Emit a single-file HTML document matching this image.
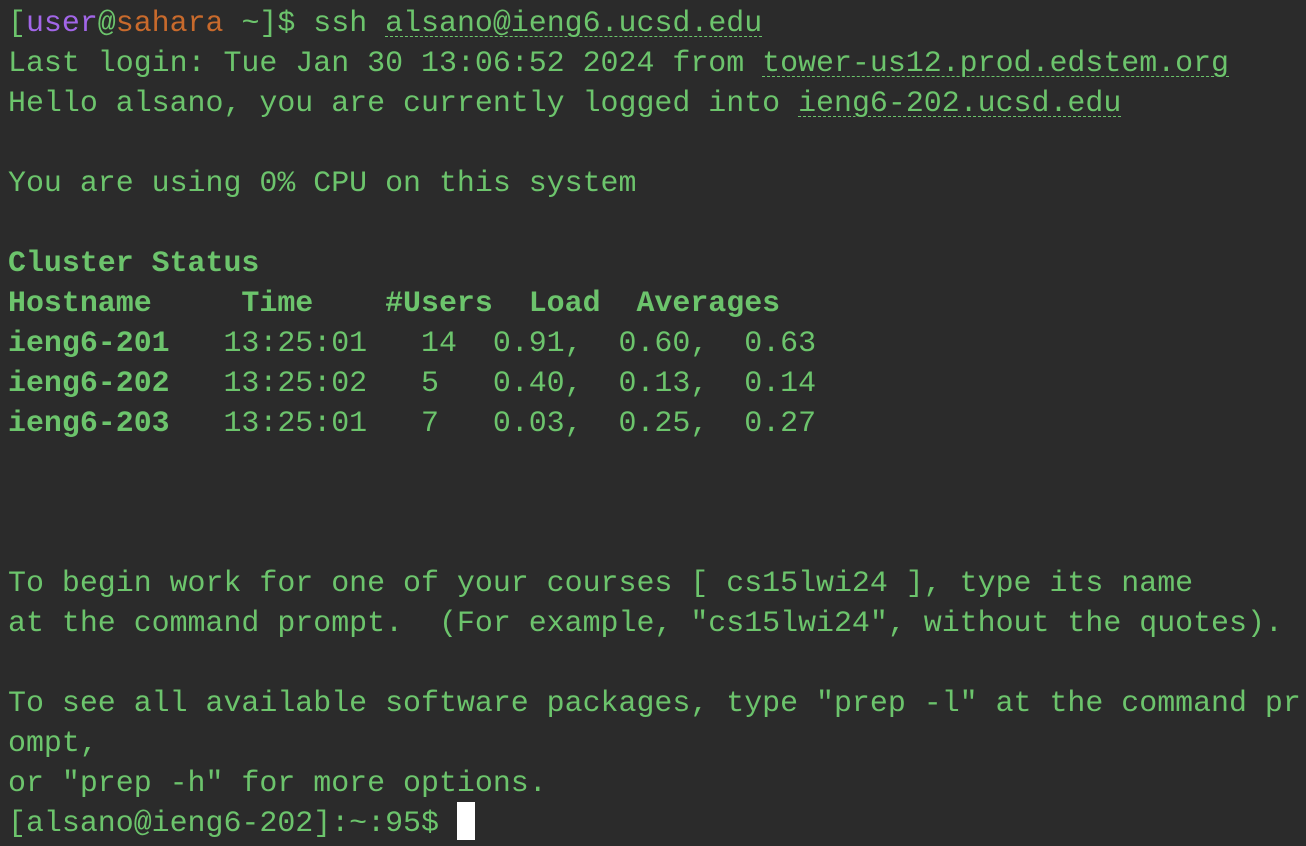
<!DOCTYPE html>
<html><head><style>
html,body{margin:0;padding:0;background:#2b2b2b;width:1306px;height:846px;overflow:hidden}
pre{margin:0;position:absolute;left:8px;top:3px;font-family:"Liberation Mono",monospace;font-size:29.93px;line-height:40px;color:#6cc46c;white-space:pre}
b{font-weight:bold}
.p{color:#a266e8}.o{color:#c86a2c}
u{text-decoration:underline dashed;text-decoration-thickness:1px;text-underline-offset:5px}
.cur{display:inline-block;width:18px;height:38px;background:#fff;vertical-align:top;margin-top:-1px}
</style></head><body>
<pre>[<span class="p">user</span>@<span class="o">sahara</span> ~]$ ssh <u>alsano@ieng6.ucsd.edu</u>
Last login: Tue Jan 30 13:06:52 2024 from <u>tower-us12.prod.edstem.org</u>
Hello alsano, you are currently logged into <u>ieng6-202.ucsd.edu</u>

You are using 0% CPU on this system

<b>Cluster Status</b>
<b>Hostname     Time    #Users  Load  Averages</b>
<b>ieng6-201</b>   13:25:01   14  0.91,  0.60,  0.63
<b>ieng6-202</b>   13:25:02   5   0.40,  0.13,  0.14
<b>ieng6-203</b>   13:25:01   7   0.03,  0.25,  0.27



To begin work for one of your courses [ cs15lwi24 ], type its name
at the command prompt.  (For example, "cs15lwi24", without the quotes).

To see all available software packages, type "prep -l" at the command pr
ompt,
or "prep -h" for more options.
[alsano@ieng6-202]:~:95$ <span class="cur"></span></pre>
</body></html>
